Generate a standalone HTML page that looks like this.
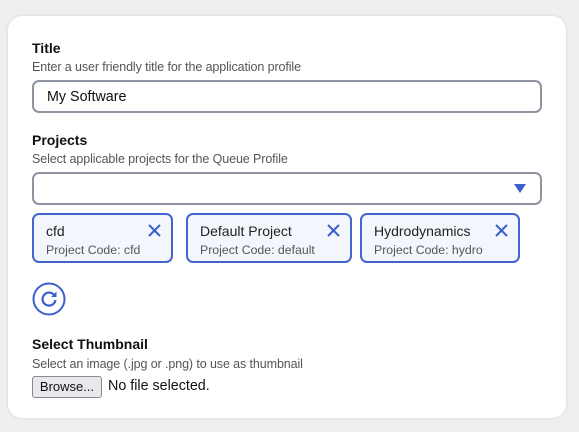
<!DOCTYPE html><html><head><style>
body{margin:0;width:579px;height:432px;background:#efefef;font-family:"Liberation Sans",sans-serif;position:relative;overflow:hidden}
.card{position:absolute;left:8px;top:16px;width:558px;height:402px;background:#fff;border-radius:14px;box-shadow:0 0 3px rgba(0,0,0,.12)}
.a{position:absolute;white-space:nowrap}
.lb{font-weight:bold;font-size:14px;color:#111}
.sb{font-size:12.5px;color:#555;letter-spacing:-0.1px}
.in{position:absolute;left:32px;width:506px;height:29px;border:2px solid #8e94a0;border-radius:7px;background:#fff}
.chip{position:absolute;top:213px;height:46px;border:2px solid #4466cc;border-radius:7px;background:#f3f6fc}
.chip .t{position:absolute;left:12px;top:8px;font-size:14px;color:#222}
.chip .c{position:absolute;left:12px;top:28px;font-size:12.3px;color:#555}
.chip svg{position:absolute;right:10px;top:9px}
</style></head><body>
<div class="card"></div>
<div class="a lb" style="left:32px;top:40px">Title</div>
<div class="a sb" style="left:32px;top:60px">Enter a user friendly title for the application profile</div>
<div class="in" style="top:80px"><span class="a" style="left:13px;top:7px;font-size:14.3px;color:#111">My Software</span></div>
<div class="a lb" style="left:32px;top:132px">Projects</div>
<div class="a sb" style="left:32px;top:152px">Select applicable projects for the Queue Profile</div>
<div class="in" style="top:172px"><svg class="a" style="left:480px;top:10px" width="12" height="9"><path d="M0 0H12L6 9Z" fill="#3b5fcc"/></svg></div>
<div class="chip" style="left:32px;width:137px"><span class="t">cfd</span><span class="c">Project Code: cfd</span><svg width="13" height="13"><path d="M1 1L12 12M12 1L1 12" stroke="#3b5fcc" stroke-width="2"/></svg></div>
<div class="chip" style="left:186px;width:162px"><span class="t">Default Project</span><span class="c">Project Code: default</span><svg width="13" height="13"><path d="M1 1L12 12M12 1L1 12" stroke="#3b5fcc" stroke-width="2"/></svg></div>
<div class="chip" style="left:360px;width:156px"><span class="t">Hydrodynamics</span><span class="c">Project Code: hydro</span><svg width="13" height="13"><path d="M1 1L12 12M12 1L1 12" stroke="#3b5fcc" stroke-width="2"/></svg></div>
<svg class="a" style="left:32px;top:282px" width="34" height="34"><circle cx="17" cy="17" r="15.5" fill="none" stroke="#3b5fcc" stroke-width="2"/><path d="M22.5 13.5A6.5 6.5 0 1 0 23.5 18" fill="none" stroke="#3b5fcc" stroke-width="2.2"/><path d="M24.5 9.5V15H19Z" fill="#3b5fcc"/></svg>
<div class="a lb" style="left:32px;top:336px">Select Thumbnail</div>
<div class="a sb" style="left:32px;top:357px">Select an image (.jpg or .png) to use as thumbnail</div>
<div class="a" style="left:32px;top:376px;width:68px;height:20px;border:1px solid #8a8a8a;border-radius:3px;background:#e9e9ed;font-size:13px;line-height:20px;text-align:center;color:#111">Browse...</div>
<div class="a" style="left:108px;top:378px;font-size:14.3px;color:#111">No file selected.</div>
</body></html>
